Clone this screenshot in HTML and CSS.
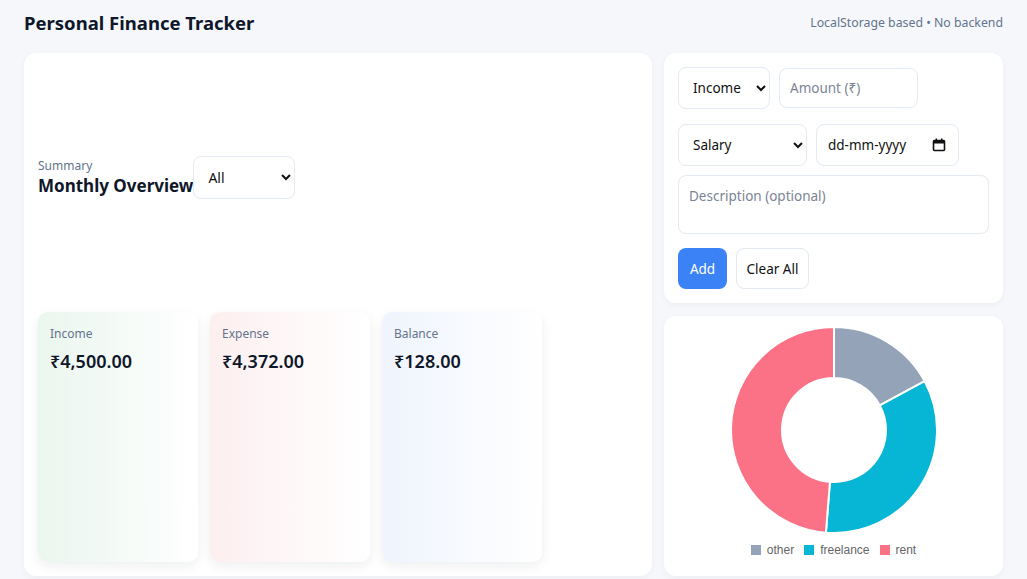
FILE: index.html
```html
<!DOCTYPE html>
<html lang="en">
<head>
<meta charset="utf-8">
<title>Personal Finance Tracker</title>
<link rel="stylesheet" href="styles.css">
</head>
<body>
<div class="page">
  <header class="topbar">
    <h1 class="title">Personal Finance Tracker</h1>
    <div class="note">LocalStorage based • No backend</div>
  </header>
  <main class="layout">
    <section class="card overview">
      <div class="ov-head">
        <div class="ov-titles">
          <div class="ov-kicker">Summary</div>
          <div class="ov-title">Monthly Overview</div>
        </div>
        <select class="field sel-month"><option>All</option></select>
      </div>
      <div class="stats">
        <div class="stat stat-income">
          <div class="stat-label">Income</div>
          <div class="stat-value">₹4,500.00</div>
        </div>
        <div class="stat stat-expense">
          <div class="stat-label">Expense</div>
          <div class="stat-value">₹4,372.00</div>
        </div>
        <div class="stat stat-balance">
          <div class="stat-label">Balance</div>
          <div class="stat-value">₹128.00</div>
        </div>
      </div>
    </section>
    <div class="side">
      <section class="card form">
        <div class="row row-1">
          <select class="field sel-type"><option>Income</option></select>
          <input class="field in-amount" type="text" placeholder="Amount (₹)">
        </div>
        <div class="row row-2">
          <select class="field sel-cat"><option>Salary</option></select>
          <div class="field fake-date">
            <span>dd-mm-yyyy</span>
            <svg class="cal" width="14" height="14" viewBox="0 0 14 14"><rect x="1.5" y="2.5" width="11" height="10" rx="1" fill="none" stroke="#111" stroke-width="1.6"/><rect x="1.5" y="2.5" width="11" height="3" fill="#111"/><rect x="3.5" y="0.5" width="1.6" height="2.5" fill="#111"/><rect x="8.9" y="0.5" width="1.6" height="2.5" fill="#111"/></svg>
          </div>
        </div>
        <textarea class="field desc" placeholder="Description (optional)"></textarea>
        <div class="row row-btn">
          <button class="btn btn-add">Add</button>
          <button class="btn btn-clear">Clear All</button>
        </div>
      </section>
      <section class="card chart">
        <svg class="donut" width="208" height="208" viewBox="0 0 208 208">
          <path d="M104 1 A103 103 0 0 1 194.69 55.17 L149.79 79.35 A52 52 0 0 0 104 52 Z" fill="#94a3b8" stroke="#fff" stroke-width="2"/>
          <path d="M194.69 55.17 A103 103 0 0 1 95.92 206.68 L99.92 155.84 A52 52 0 0 0 149.79 79.35 Z" fill="#06b6d4" stroke="#fff" stroke-width="2"/>
          <path d="M95.92 206.68 A103 103 0 0 1 104 1 L104 52 A52 52 0 0 0 99.92 155.84 Z" fill="#fb7185" stroke="#fff" stroke-width="2"/>
        </svg>
        <div class="legend">
          <span class="lg"><i class="sw sw-other"></i>other</span>
          <span class="lg"><i class="sw sw-free"></i>freelance</span>
          <span class="lg"><i class="sw sw-rent"></i>rent</span>
        </div>
      </section>
    </div>
  </main>
</div>
</body>
</html>
```

FILE: styles.css
```css
* { box-sizing: border-box; }
html, body { margin: 0; padding: 0; }
body {
  background: #f5f7fb;
  font-family: "Noto Sans", "Open Sans", sans-serif;
  color: #0f172a;
}
.page { padding: 0 24px; height: 579px; }
.topbar {
  height: 44px;
  display: flex;
  align-items: center;
  justify-content: space-between;
}
.title { margin: 0; font-size: 18.5px; font-weight: 700; color: #0f172a; }
.note { font-size: 12.3px; color: #64748b; }
.layout {
  margin-top: 9px;
  display: grid;
  grid-template-columns: 1fr 339px;
  gap: 12px;
  height: 523px;
}
.card {
  background: #fff;
  border-radius: 12px;
  box-shadow: 0 2px 6px rgba(15, 23, 42, 0.04);
}
.overview {
  padding: 14px;
  display: grid;
  grid-template-rows: 1fr 250px;
  row-gap: 14px;
}
.ov-head { display: flex; align-items: center; padding-bottom: 10px; }
.ov-kicker { font-size: 12px; color: #64748b; line-height: 16px; }
.ov-title { font-size: 17px; font-weight: 700; line-height: 24px; color: #0f172a; }
.field {
  font-family: "Noto Sans", "Open Sans", sans-serif;
  font-size: 13.5px;
  color: #111;
  background: #fff;
  border: 1px solid #e3eaf4;
  border-radius: 8px;
  outline: none;
}
.field::placeholder { color: #7b8494; }
.sel-month { width: 102px; height: 43px; padding: 0 8px 0 10px; font-size: 14px; }
.stats { display: flex; gap: 12px; }
.stat {
  width: 160px;
  border-radius: 10px;
  padding: 14px 12px;
  box-shadow: 0 4px 12px rgba(15, 23, 42, 0.07);
}
.stat-income { background: linear-gradient(90deg, #eaf6ee 0%, #ffffff 100%); }
.stat-expense { background: linear-gradient(90deg, #fdeff0 0%, #ffffff 100%); }
.stat-balance { background: linear-gradient(90deg, #eff4fd 0%, #ffffff 100%); }
.stat-label { font-size: 12px; color: #64748b; line-height: 16px; }
.stat-value { margin-top: 7px; font-size: 18px; font-weight: 600; color: #0f172a; line-height: 24px; }
.side { display: grid; grid-template-rows: 250px 1fr; gap: 13px; }
.form { padding: 14px; display: flex; flex-direction: column; gap: 9px; }
.row { display: flex; gap: 9px; align-items: center; }
.row-1 { height: 42px; }
.sel-type { width: 92px; height: 42px; padding: 0 4px 0 10px; }
.in-amount { width: 139px; height: 40px; padding: 0 10px; }
.row-2 { height: 42px; margin-top: 6px; }
.sel-cat { width: 129px; height: 42px; padding: 0 4px 0 10px; }
.fake-date {
  width: 143px; height: 42px;
  display: flex; align-items: center; justify-content: space-between;
  padding: 0 12px 0 11px;
}
.desc { height: 60px; width: 100%; resize: none; padding: 11px 10px; }
.row-btn { margin-top: 5px; }
.btn {
  font-family: "Noto Sans", "Open Sans", sans-serif;
  font-size: 13.5px;
  height: 41px;
  border-radius: 8px;
  padding: 0;
  white-space: nowrap;
  cursor: pointer;
}
.btn-add { background: #3b82f6; color: #fff; border: none; width: 49px; }
.btn-clear { background: #fff; color: #111; border: 1px solid #e3eaf4; width: 73px; }
.chart {
  padding: 10px 14px;
  display: flex;
  flex-direction: column;
  align-items: center;
}
.donut { display: block; }
.legend {
  margin-top: 9px;
  display: flex;
  gap: 10px;
  font-family: "Liberation Sans", Arial, sans-serif;
  font-size: 12px;
  color: #666;
  line-height: 14px;
}
.lg { display: flex; align-items: center; gap: 6px; }
.sw { display: inline-block; width: 10px; height: 10px; }
.sw-other { background: #94a3b8; }
.sw-free { background: #06b6d4; }
.sw-rent { background: #fb7185; }
```
